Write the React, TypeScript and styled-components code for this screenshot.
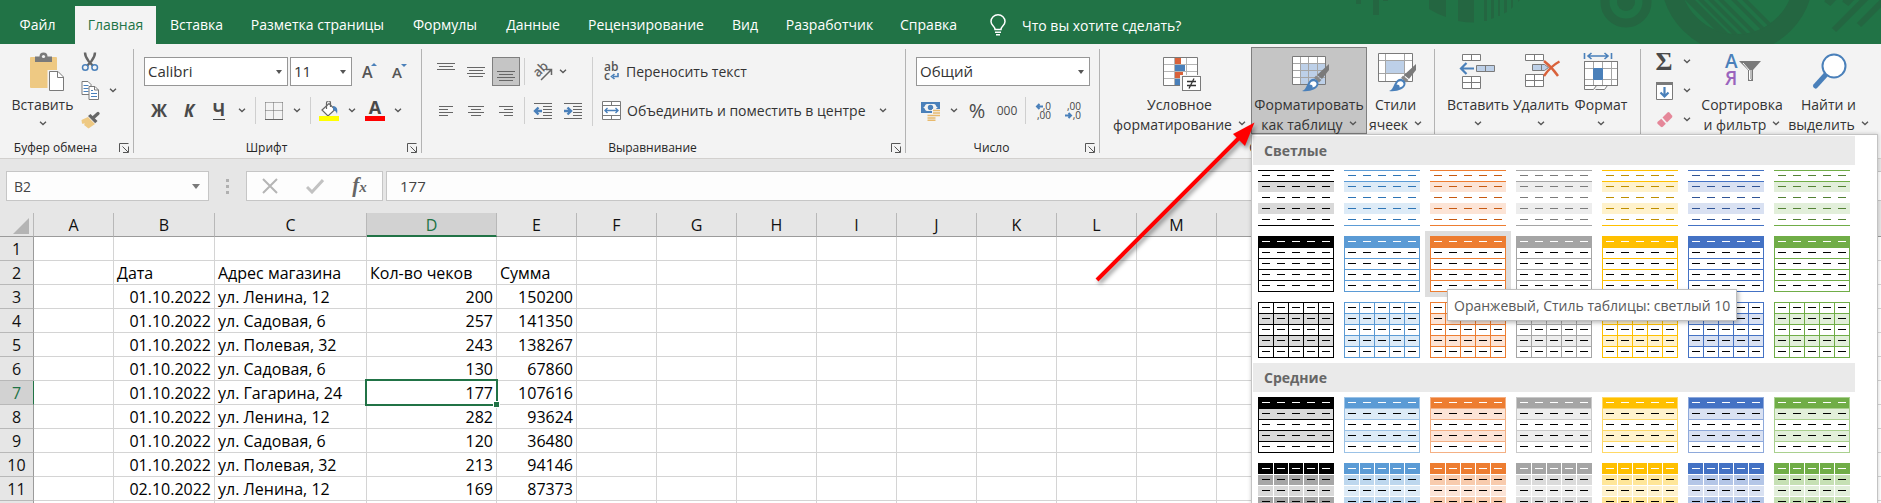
import React from "react";
import styled, { createGlobalStyle, css } from "styled-components";

/* ---------- tokens ---------- */
const GREEN = "#217346";
const BLUE = "#4a80ba";
const GREY = "#7a7a7a";
const UI = `"Open Sans", "Noto Sans", sans-serif`;

const GlobalStyle = createGlobalStyle`
  *, *::before, *::after { box-sizing: border-box; }
  body { margin: 0; font-family: ${UI}; font-size: 14px; color: #333; }
  button, input, select { font: inherit; color: inherit; margin: 0; }
  button { background: none; border: 0; padding: 0; cursor: pointer; }
`;

const Page = styled.div`
  position: relative;
  display: flex;
  flex-direction: column;
  height: 100vh;
  overflow: hidden;
  background: #fff;
`;

/* ---------- tab strip ---------- */
const TabStrip = styled.header`
  position: relative;
  display: flex;
  flex: none;
  height: 44px;
  padding-top: 6px;
  background: ${GREEN};
`;
const Tab = styled.button<{ $w: number; $active?: boolean }>`
  flex: none;
  width: ${(p) => p.$w}px;
  padding-bottom: 1px;
  white-space: nowrap;
  color: ${(p) => (p.$active ? GREEN : "#fff")};
  background: ${(p) => (p.$active ? "#f3f3f3" : "transparent")};
`;
const TellMe = styled.button`
  display: flex;
  align-items: center;
  gap: 16px;
  margin-left: 20px;
  color: #fff;
  white-space: nowrap;
`;
const Pattern = styled.svg`
  position: absolute;
  top: 0;
  right: 0;
`;

/* ---------- ribbon ---------- */
const Ribbon = styled.div`
  display: flex;
  flex: none;
  height: 115px;
  padding-top: 3px;
  background: #f3f3f3;
  border-bottom: 1px solid #d2d0ce;
`;
const GroupBox = styled.section<{ $w?: number }>`
  display: flex;
  flex-direction: column;
  ${(p) => (p.$w ? css`flex: none; width: ${p.$w}px;` : css`flex: 1;`)}
`;
const GroupBody = styled.div<{ $pad: number }>`
  display: flex;
  height: 87px;
  padding-left: ${(p) => p.$pad}px;
`;
const GroupFoot = styled.div`
  display: flex;
  align-items: center;
  height: 24px;
  padding-top: 3px;
  font-size: 12px;
  line-height: 20px;
  color: #262626;
`;
const GroupName = styled.span`
  flex: 1;
  text-align: center;
  white-space: nowrap;
`;
const Launcher = styled.button`
  display: flex;
  width: 22px;
  justify-content: center;
  padding-left: 4px;
`;
const GroupRule = styled.i`
  flex: none;
  width: 1px;
  margin: 2px 0 5px;
  background: #b3b3b3;
`;
const Rule = styled.i<{ $tall?: boolean; $l?: number; $r?: number }>`
  flex: none;
  width: 1px;
  height: ${(p) => (p.$tall ? 69 : 27)}px;
  margin-left: ${(p) => p.$l ?? 3}px;
  margin-right: ${(p) => p.$r ?? 3}px;
  background: #cfcfcf;
`;
const Rows = styled.div`
  display: flex;
  flex-direction: column;
  gap: 10px;
  padding-top: 10px;
`;
const Row = styled.div`
  display: flex;
  align-items: center;
  height: 29px;
`;
const SmallColumn = styled.div`
  display: flex;
  flex-direction: column;
  width: 48px;
`;
const Tool = styled.button<{ $on?: boolean }>`
  display: flex;
  flex: none;
  align-items: center;
  justify-content: center;
  width: ${(p) => (p.$on ? 28 : 30)}px;
  height: 29px;
  margin: ${(p) => (p.$on ? "0 1px" : "0")};
  ${(p) => p.$on && css`background: #c5c5c5; border: 1px solid #7f7f7f;`}
`;
const Drop = styled.button<{ $w?: number }>`
  display: flex;
  flex: none;
  align-items: center;
  justify-content: center;
  width: ${(p) => p.$w ?? 16}px;
  height: 29px;
`;
const Glyph = styled.span<{ $size?: number; $italic?: boolean; $under?: boolean; $bold?: boolean; $serif?: boolean }>`
  font-family: ${(p) => (p.$serif ? `"Liberation Serif", serif` : UI)};
  font-size: ${(p) => p.$size ?? 17}px;
  line-height: 18px;
  font-weight: ${(p) => (p.$bold ? 700 : 400)};
  font-style: ${(p) => (p.$italic ? "italic" : "normal")};
  border-bottom: ${(p) => (p.$under ? "1px solid #444" : "0")};
  color: #4a4a4a;
`;
const Swab = styled.span<{ $ink: string }>`
  display: flex;
  flex-direction: column;
  align-items: center;
  width: 20px;
  height: 20px;
  border-bottom: 5px solid ${(p) => p.$ink};
  font-size: 18px;
  font-weight: 700;
  line-height: 13px;
  color: #4a4a4a;
`;
const WideTool = styled.button`
  display: flex;
  align-items: center;
  gap: 6px;
  height: 29px;
  white-space: nowrap;
`;
const Big = styled.button<{ $w: number; $on?: boolean }>`
  display: flex;
  flex: none;
  flex-direction: column;
  align-items: center;
  width: ${(p) => p.$w}px;
  height: 87px;
  border: 1px solid ${(p) => (p.$on ? "#7f7f7f" : "transparent")};
  background: ${(p) => (p.$on ? "#c5c5c5" : "transparent")};
  line-height: 20px;
  white-space: nowrap;
`;
const BigIcon = styled.span`
  display: flex;
  flex: none;
  align-items: center;
  height: 46px;
`;
const BigLine = styled.span`
  display: flex;
  flex: none;
  align-items: center;
  justify-content: center;
  gap: 6px;
  height: 20px;
  padding-top: 1px;
  svg { margin-bottom: 3px; }
`;
const Anchor = styled.div`
  position: relative;
`;
const SelectBox = styled.span<{ $w: number }>`
  position: relative;
  flex: none;
  width: ${(p) => p.$w}px;
  height: 29px;
  margin-right: 2px;
  &::after {
    content: "";
    position: absolute;
    right: 6px;
    top: 13px;
    border: 3px solid transparent;
    border-top: 4px solid #555;
    border-bottom: 0;
    pointer-events: none;
  }
  select {
    appearance: none;
    width: 100%;
    height: 100%;
    padding: 0 0 1px 3px;
    border: 1px solid #969696;
    border-radius: 0;
    background: #fff;
    font-size: 15px;
  }
`;

/* ---------- gallery ---------- */
const Gallery = styled.div`
  position: absolute;
  z-index: 5;
  top: 100%;
  left: 0;
  width: 627px;
  padding: 1px;
  background: #fff;
  border: 1px solid #c3c3c3;
  box-shadow: 0 0 4px rgba(0, 0, 0, 0.2);
`;
const GalleryTitle = styled.h2`
  width: 602px;
  height: 29px;
  margin: 0;
  padding-left: 11px;
  background: #eaeaea;
  color: #666;
  font-size: 14px;
  font-weight: 700;
  line-height: 30px;
`;
const SwatchGrid = styled.div`
  display: grid;
  width: 602px;
  grid-template-columns: repeat(7, 86px);
  grid-auto-rows: 66px;
`;
const Swatch = styled.button<{ $hover?: boolean }>`
  display: flex;
  align-items: center;
  justify-content: center;
  background: ${(p) => (p.$hover ? "#dedede" : "transparent")};
`;
const Tooltip = styled.div`
  position: absolute;
  z-index: 6;
  top: 154px;
  left: 195px;
  height: 32px;
  padding: 0 6px;
  border: 1px solid #bebebe;
  background: #fff;
  color: #595959;
  line-height: 32px;
  white-space: nowrap;
  box-shadow: 2px 2px 4px rgba(0, 0, 0, 0.25);
`;

/* ---------- formula bar ---------- */
const FormulaBar = styled.div`
  display: flex;
  flex: none;
  height: 54px;
  padding: 12px 0 12px 6px;
  background: #e6e6e6;
  color: #444;
`;
const NameBox = styled.div`
  display: flex;
  width: 203px;
  border: 1px solid #c6c6c6;
  background: #fdfdfd;
  input {
    flex: 1;
    min-width: 0;
    border: 0;
    padding: 0 0 0 7px;
    background: transparent;
  }
  button { width: 24px; }
`;
const Triangle = styled.i`
  display: block;
  width: 0;
  margin: 0 auto;
  border: 4px solid transparent;
  border-top: 5px solid #7a7a7a;
  border-bottom: 0;
`;
const Dots = styled.span`
  display: flex;
  flex-direction: column;
  align-items: center;
  justify-content: center;
  gap: 3px;
  width: 37px;
  i { width: 3px; height: 3px; background: #b0b0b0; }
`;
const EntryTools = styled.div`
  display: flex;
  width: 137px;
  margin-right: 3px;
  border: 1px solid #c6c6c6;
  background: #fdfdfd;
  button { flex: 1; display: flex; align-items: center; justify-content: center; }
`;
const FormulaInput = styled.input`
  flex: 1;
  min-width: 0;
  padding: 0 0 0 13px;
  border: 1px solid #c6c6c6;
  border-right: 0;
  border-radius: 0;
  background: #fdfdfd;
  font-size: 15px;
`;
const Fx = styled.span`
  font: italic 700 21px/24px "Liberation Serif", serif;
  color: #666;
  small { font-size: 15px; }
`;

/* ---------- sheet ---------- */
const Sheet = styled.table`
  flex: none;
  width: max-content;
  table-layout: fixed;
  border-spacing: 0;
  font-size: 16px;
  line-height: 22px;
  color: #000;
  tr { height: 24px; }
  th, td { padding: 1px 3px 0; height: 24px; white-space: nowrap; overflow: visible; }
`;
const ColHead = styled.th<{ $on?: boolean }>`
  font-weight: 400;
  line-height: 20px;
  text-align: center;
  color: ${(p) => (p.$on ? GREEN : "#111")};
  background: ${(p) => (p.$on ? "#d2d2d2" : "#e6e6e6")};
  border-right: 1px solid #b8b8b8;
  border-bottom: ${(p) => (p.$on ? `2px solid ${GREEN}` : "1px solid #9b9b9b")};
`;
const Corner = styled.th`
  background: #e6e6e6;
  border-right: 1px solid #b8b8b8;
  border-bottom: 1px solid #9b9b9b;
  svg { display: block; margin: 2px 0 0 10px; }
`;
const RowHead = styled.th<{ $on?: boolean }>`
  font-weight: 400;
  text-align: center;
  color: ${(p) => (p.$on ? GREEN : "#111")};
  background: ${(p) => (p.$on ? "#d2d2d2" : "#e6e6e6")};
  border-right: 1px solid ${(p) => (p.$on ? GREEN : "#9b9b9b")};
  border-bottom: 1px solid #b8b8b8;
`;
const Cell = styled.td<{ $num?: boolean; $on?: boolean }>`
  text-align: ${(p) => (p.$num ? "right" : "left")};
  border-right: 1px solid #d4d4d4;
  border-bottom: 1px solid #d4d4d4;
  ${(p) =>
    p.$on &&
    css`
      position: relative;
      &::before {
        content: "";
        position: absolute;
        inset: -2px;
        border: 2px solid ${GREEN};
      }
      &::after {
        content: "";
        position: absolute;
        right: -4px;
        bottom: -4px;
        width: 7px;
        height: 7px;
        border: 1px solid #fff;
        background: ${GREEN};
      }
    `}
`;
const Pointer = styled.svg`
  position: absolute;
  z-index: 8;
  top: 110px;
  left: 1085px;
  pointer-events: none;
  filter: drop-shadow(2px 3px 2px rgba(0, 0, 0, 0.4));
`;

/* ---------- icons ---------- */
const Chevron = () => (
  <svg width="8" height="5" viewBox="0 0 8 5" fill="none" stroke="#555" strokeWidth="1.3">
    <path d="M1 .8 4 3.6 7 .8" />
  </svg>
);
const LauncherIcon = () => (
  <svg width="11" height="10" viewBox="0 0 11 10" fill="none" stroke="#555">
    <path d="M.5 9V.5H9.500M3.500 3.500 9 9M9.500 3.500V9.500H4" />
  </svg>
);
const Bulb = () => (
  <svg width="16" height="22" viewBox="0 0 16 22" fill="none" stroke="#fff" strokeWidth="1.5">
    <path d="M5 15.500C5 12.500 1 11.500 1 7.500a7 6.700 0 0 1 14 0c0 4-4 5-4 8Z" />
    <path d="M5 18.200h6M6 20.700h4" />
  </svg>
);
const PasteIcon = () => (
  <svg width="38" height="40" viewBox="0 0 38 40" overflow="visible">
    <rect x="6" y="6" width="27" height="31" rx="1" fill="#eec983" />
    <path d="M11 11V5.500h4.500a4 4 0 0 1 8 0H28V11Z" fill={GREY} />
    <circle cx="19.500" cy="5.500" r="1.600" fill="#f3f3f3" />
    <path d="M23.500 19h10.800l6 6v15.500H23.500Z" fill="#f3f3f3" />
    <path d="M25.500 20.500h8.500l5.500 5.500v13.500h-14Z" fill="#fff" stroke={GREY} />
    <path d="M33.500 20.500V26.500h6" fill="none" stroke={GREY} />
  </svg>
);
const CutIcon = () => (
  <svg width="18" height="20" viewBox="0 0 18 20" fill="none">
    <path d="M4 .5c0 3 2 6.500 3.500 8.500l5 5.500M14 .5c0 3-2 6.500-3.500 8.500l-5 5.500" stroke="#666" strokeWidth="2.400" />
    <circle cx="4.300" cy="15.500" r="2.800" stroke={BLUE} strokeWidth="1.500" fill="#f3f3f3" />
    <circle cx="13.700" cy="15.500" r="2.800" stroke={BLUE} strokeWidth="1.500" fill="#f3f3f3" />
  </svg>
);
const CopyIcon = () => (
  <svg width="18" height="19" viewBox="0 0 18 19" fill="#fff" stroke={GREY}>
    <path d="M1 .5h6l3 3v10H1Z" />
    <path d="M2.500 4.500h5M2.500 7.500h5M2.500 10.500h5" stroke={BLUE} />
    <path d="M8 5.500h6l3.500 3.500v9.500H8Z" />
    <path d="M13.500 5.500V9h4" fill="none" />
    <path d="M10 9.500h2M10 12.500h6M10 15.500h6" stroke={BLUE} />
  </svg>
);
const PainterIcon = () => (
  <svg width="19" height="18" viewBox="0 0 19 18">
    <path d="M.5 9 7 6l7 7-6.500 4.500L3 14l1-1.500-3 .3Z" fill="#eec983" />
    <path d="M7 5 9.500 3l7 7-2.300 2.300Z" fill="#666" />
    <path d="m12.500 6.500 4.500-4" stroke="#666" strokeWidth="3.200" strokeLinecap="round" />
  </svg>
);
const GrowFont = ({ down }: { down?: boolean }) => (
  <svg width="20" height="20" viewBox="0 0 20 20" overflow="visible">
    <text x="3" y="16" fontFamily="Open Sans" fontWeight="600" fontSize={down ? 15 : 16} fill="#555">A</text>
    <path d={down ? "M12 2h6l-3 3Z" : "M12 4h6l-3-3Z"} fill={BLUE} />
  </svg>
);
const BordersIcon = () => (
  <svg width="18" height="18" viewBox="0 0 18 18" fill="none" stroke="#666">
    <path d="M.5 .5h17M.5 8.500h17M.5 .5v17M8.500 .5v17M17.500 .5v17" strokeDasharray="1 1" />
    <path d="M0 17.500h18" />
  </svg>
);
const FillIcon = () => (
  <svg width="22" height="20" viewBox="0 0 22 20">
    <path d="m4 9 7-6.500 6 6-7 6.500Z" fill="#fff" stroke="#666" strokeWidth="1.200" />
    <path d="M8.500 8V2a2 2 0 0 1 4 0v4" fill="none" stroke="#666" strokeWidth="1.200" />
    <path d="M15 5c4 .5 5 3 4 8-1-3-2.500-4-4-4Z" fill={BLUE} />
    <rect x="1" y="15" width="20" height="5" fill="#ff0" />
  </svg>
);
const Lines = ({ rows }: { rows: [number, number, number][] }) => (
  <svg width="20" height="20" viewBox="0 0 20 20" stroke="#666">
    {rows.map(([x, y, w]) => (
      <path key={y} d={`M${x} ${y}.5h${w}`} />
    ))}
  </svg>
);
const IndentIcon = ({ right }: { right?: boolean }) => (
  <svg width="20" height="18" viewBox="0 0 20 18" stroke="#666">
    <path d="M1 1.500h18M10 4.500h9M10 7.500h9M10 10.500h9M10 13.500h9M1 16.500h18" />
    <path
      d={right ? "M1 9h6M4.500 5.500 8 9l-3.500 3.500" : "M9 9H3M5.500 5.500 2 9l3.500 3.500"}
      fill="none" stroke={BLUE} strokeWidth="2.400"
    />
  </svg>
);
const AngleIcon = () => (
  <svg width="20" height="20" viewBox="0 0 20 20" overflow="visible">
    <text x="3" y="15" fontFamily="Open Sans" fontWeight="600" fontSize="13" fill="#666" transform="rotate(-45 5 13)">ab</text>
    <path d="m8 18 10-10M13 7.500h5.500V13" fill="none" stroke="#666" strokeWidth="1.500" />
  </svg>
);
const WrapIcon = () => (
  <svg width="18" height="20" viewBox="0 0 18 20" overflow="visible">
    <text x="2" y="9" fontFamily="Open Sans" fontWeight="600" fontSize="12" fill="#555">ab</text>
    <text x="2" y="18" fontFamily="Open Sans" fontWeight="600" fontSize="12" fill="#555">c</text>
    <path d="M16 11v3.500h-5M12.500 12l-3 2.500 3 2.500" fill="none" stroke={BLUE} strokeWidth="1.600" />
  </svg>
);
const MergeIcon = () => (
  <svg width="19" height="19" viewBox="0 0 19 19" fill="#fff" stroke={GREY}>
    <path d="M.5 .5h18v18H.5ZM.5 4.500h18M.5 14.500h18M9.500 .5v4M9.500 14.500v4" />
    <path d="M3 9.500h13M5.500 7 3 9.500 5.500 12M13.500 7 16 9.500 13.500 12" fill="none" stroke={BLUE} strokeWidth="1.400" />
  </svg>
);
const MoneyIcon = () => (
  <svg width="20" height="20" viewBox="0 0 20 20">
    <rect x="0" y="1" width="19" height="11" fill={BLUE} />
    <path d="M2 6.500c2 0 2-3.500 4-3.500h7c2 0 2 3.500 4 3.500-2 0-2 3.500-4 3.500H6c-2 0-2-3.500-4-3.500Z" fill="#f3f3f3" />
    <circle cx="9.500" cy="6.500" r="2.700" fill={BLUE} />
    <path d="M11 8h9v11h-5v1H5v-7h6Z" fill="#f3f3f3" />
    <path d="M12 9.500h7M12 12h7M12 14.500h7M6.500 14.500h8M6.500 17h8M6.500 19.300h8" stroke="#e8b96c" strokeWidth="1.700" />
  </svg>
);
const DecimalIcon = ({ less }: { less?: boolean }) => (
  <svg width="20" height="20" viewBox="0 0 20 20" overflow="visible" fontFamily="Open Sans" fontSize="10" fill="#444">
    <text x="17" y="9" textAnchor="end">{less ? ",00" : ",0"}</text>
    <text x="17" y="18" textAnchor="end">{less ? ",0" : ",00"}</text>
    <path
      d={less ? "M1 14.500h6M4.500 12 7 14.500 4.500 17" : "M9 5.500H3M5.500 3 3 5.500 5.500 8"}
      fill="none" stroke={BLUE} strokeWidth="2"
    />
  </svg>
);
const ConditionalIcon = () => (
  <svg width="38" height="40" viewBox="0 0 38 40" overflow="visible">
    <path d="M2.500 6.500h34v28h-34Z" fill="#fff" />
    <path d="M13 7h7v6h-7ZM13 21h9v6h-9Z" fill="#d9623b" />
    <path d="M13 14h11v6H13ZM13 28h6v6h-6Z" fill={BLUE} />
    <path d="M13.500 7v27M25.500 7v27M3 13.500h33M3 20.500h33M3 27.500h33" stroke="#b5b5b5" />
    <path d="M2.500 6.500h34v28h-34Z" fill="none" stroke={GREY} />
    <rect x="19" y="24" width="22" height="17" fill="#f3f3f3" />
    <rect x="21.500" y="25.500" width="18" height="14" fill="#fff" stroke={GREY} />
    <path d="M26 30.500h9M26 34.500h9M33 27.500l-5 10" stroke="#333" strokeWidth="1.300" />
  </svg>
);
const Brush = () => (
  <g>
    <path d="M39 13v6L32 28l-5-4Z" fill={GREY} />
    <path d="m26 24.500 5.500 4.500-2.500 2.500-5-4.500Z" fill="#888" />
    <path d="M12 40c5-1 4-8 9-11.500 3-2 8 1 7.500 4.500C28 38 20 41 12 40Z" fill={BLUE} />
    <path d="M21 31c3-2 6 0 5.500 2.500-.5 1.500-2 2.500-4 3 .5-2-.5-3-3-3Z" fill="#fff" />
  </g>
);
const FormatTableIcon = () => (
  <svg width="38" height="40" viewBox="0 0 38 40" overflow="visible">
    <path d="M2.500 5.500h33v28h-33Z" fill="#fff" />
    <path d="M11 13h24v20H11Z" fill="#bdd0e8" />
    <path d="M10.500 6v27M18.500 6v27M27.500 6v27M3 12.500h32M3 19.500h32M3 26.500h32" stroke="#a5a5a5" />
    <path d="M2.500 5.500h33v28h-33Z" fill="none" stroke={GREY} />
    <Brush />
  </svg>
);
const CellStylesIcon = () => (
  <svg width="38" height="40" viewBox="0 0 38 40" overflow="visible">
    <path d="M1.500 2.500h34v28h-34Z" fill="#fff" />
    <path d="M9 10h18v12H9Z" fill="#bdd0e8" />
    <path d="M8.500 3v27M27.500 3v27M2 9.500h33M2 22.500h33" stroke="#a5a5a5" />
    <path d="M1.500 2.500h34v28h-34Z" fill="none" stroke={GREY} />
    <Brush />
  </svg>
);
const InsertIcon = () => (
  <svg width="38" height="40" viewBox="0 0 38 40" fill="#fff" stroke={GREY}>
    <path d="M3.500 3.500h18v6h-18ZM12.500 3.500v6M3.500 25.500h18v12h-18ZM12.500 25.500v12M3.500 31.500h18" />
    <path d="M17.500 14.500h18v6h-18ZM26.500 14.500v6" fill="#bdd0e8" />
    <path d="M15 17.500H2M7.500 12 2 17.500 7.500 23" fill="none" stroke={BLUE} strokeWidth="2.200" />
  </svg>
);
const DeleteIcon = () => (
  <svg width="38" height="40" viewBox="0 0 38 40" fill="#fff" stroke={GREY}>
    <path d="M3.500 3.500h18v6h-18ZM12.500 3.500v6M3.500 23.500h18v12h-18ZM12.500 23.500v12M3.500 29.500h18" />
    <path d="M10.500 13.500h12l4 3-4 3h-12ZM19.500 13.500v6" fill="#bdd0e8" />
    <path d="M22 10c5 4 10 9 14 15M37.500 10.500C31 14 26 19 22 25" fill="none" stroke="#d9623b" strokeWidth="2.400" />
  </svg>
);
const FormatIcon = () => (
  <svg width="38" height="40" viewBox="0 0 38 40" fill="#fff" stroke={GREY}>
    <path d="M2.500 2v6M29.500 2v6M6 5h20M9.500 2 6 5l3.500 3M22.500 2 26 5l-3.500 3" fill="none" stroke={BLUE} strokeWidth="1.600" />
    <path d="M2.500 34.500v4h9l3-4M13.500 38.500h9l3-4" />
    <path d="M2.500 10.500h33v24h-33Z" />
    <path d="M11.500 11v23M20.500 11v23M29.500 11v23M3 17.500h32M3 28.500h32" stroke="#a5a5a5" />
    <path d="M11.500 17.500h9v11h-9Z" fill={BLUE} stroke={BLUE} />
    <path d="M2.500 10.500h33v24h-33Z" fill="none" />
  </svg>
);
const FillDownIcon = () => (
  <svg width="17" height="18" viewBox="0 0 17 18">
    <path d="M.5 .5h16v17H.5Z" fill="#fff" stroke={GREY} />
    <path d="M0 0h17v3H0Z" fill={GREY} />
    <path d="M8.500 5v9M4.500 10.500l4 4 4-4" fill="none" stroke={BLUE} strokeWidth="2.200" />
  </svg>
);
const EraserIcon = () => (
  <svg width="17" height="18" viewBox="0 0 17 18">
    <path d="m6.500 6.500 5-5q1-.8 2 0l2.500 3q.8 1 0 2l-5 5Z" fill="#e58799" />
    <path d="m5.300 7.700 4.500 5-3 3q-1 .9-2 0l-3.300-3q-.7-1 .2-2Z" fill="#e58799" />
  </svg>
);
const SortIcon = () => (
  <svg width="38" height="40" viewBox="0 0 38 40" overflow="visible" fontFamily="Open Sans" fontWeight="600" fontSize="19">
    <text x="2" y="17" fill={BLUE}>А</text>
    <text x="2" y="34" fill="#9a64bd">Я</text>
    <path d="M16 10h22l-8 9v11h-5V19Z" fill={GREY} />
    <path d="m20 12 6.500 7.500V28.500h1.500V19" fill="none" stroke="#fff" strokeWidth="1" />
  </svg>
);
const FindIcon = () => (
  <svg width="38" height="40" viewBox="0 0 38 40">
    <path d="m15.500 24-10 11" stroke={BLUE} strokeWidth="5" strokeLinecap="round" />
    <circle cx="24" cy="15" r="11.500" fill="#fff" stroke={BLUE} strokeWidth="2" />
  </svg>
);

const HeaderPattern = () => (
  <Pattern width="541" height="44" viewBox="1340 0 541 44" fill="#246641">
    <defs>
      <clipPath id="disc"><circle cx="1737" cy="-23" r="58" /></clipPath>
    </defs>
    <path d="M1356 0h5v4h-5ZM1373 0h6v15h-6ZM1383 0h5v1h-5Z" />
    <path d="M1429 0h17v17q-9-3-17-8ZM1458 0h16v22.500q-8 0-16-1.500ZM1484 0h3v21h-3ZM1491 0h3v18l-3 1ZM1498 0h2v16h-2ZM1504 0h3v12l-3 1.500ZM1511 0h2v7l-2 2ZM1518 0h2l-2 2Z" />
    <circle cx="1626" cy="2" r="21" fill="none" stroke="#246641" strokeWidth="9" />
    <circle cx="1626" cy="2" r="9" />
    <circle cx="1737" cy="-23" r="66.500" fill="none" stroke="#246641" strokeWidth="19" />
    <g clipPath="url(#disc)" stroke="#246641" strokeWidth="4">
      <path d="m1686-4 50 50" strokeWidth="7" />
      <path d="m1697-4 50 50M1707-4l50 50M1717-4l50 50M1730-4l50 50M1741-4l50 50" />
    </g>
    <path d="m1834 30 34-34M1859 25l28-28M1826-1l4 3 4-4M1844-1l4 3 4-4" fill="none" stroke="#246641" strokeWidth="6" />
  </Pattern>
);

/* ---------- table style thumbnails ---------- */
type Tone = { name: string; base: string; dark: string; pale: string; mid: string; edge: string };
const TONES: Tone[] = [
  { name: "Чёрный", base: "#000", dark: "#000", pale: "#d9d9d9", mid: "#a6a6a6", edge: "#000" },
  { name: "Синий", base: "#5b9bd5", dark: "#2e75b6", pale: "#ddebf7", mid: "#bdd7ee", edge: "#9bc2e6" },
  { name: "Оранжевый", base: "#ed7d31", dark: "#c65911", pale: "#fce4d6", mid: "#f8cbad", edge: "#f4b084" },
  { name: "Серый", base: "#a5a5a5", dark: "#7b7b7b", pale: "#ededed", mid: "#dbdbdb", edge: "#c9c9c9" },
  { name: "Золотистый", base: "#ffc000", dark: "#bf8f00", pale: "#fff2cc", mid: "#ffe699", edge: "#ffd966" },
  { name: "Голубой", base: "#4472c4", dark: "#305496", pale: "#d9e1f2", mid: "#b4c6e7", edge: "#8ea9db" },
  { name: "Зелёный", base: "#70ad47", dark: "#548235", pale: "#e2efda", mid: "#c6e0b4", edge: "#a9d08e" },
];
type Kind = "striped" | "boxed" | "grid" | "banded" | "tiles";
const five = [0, 1, 2, 3, 4];
const LINES_BY_KIND: Record<Kind, number[]> = {
  striped: [0, 11, 55],
  boxed: [0, 11, 22, 33, 44, 55],
  grid: [0, 11, 22, 33, 44, 55],
  banded: [0, 11, 22, 33, 44, 55],
  tiles: [11, 22, 33, 44],
};

function Thumb({ kind, tone }: { kind: Kind; tone: Tone }) {
  const header = kind === "boxed" || kind === "banded" || kind === "tiles";
  const line = kind === "tiles" ? "#fff" : kind === "banded" ? tone.edge : tone.base;
  const fillOf = (r: number) => {
    if (r === 0) return header ? tone.base : "#fff";
    if (kind === "boxed") return "#fff";
    if (kind === "tiles") return r % 2 ? tone.mid : tone.pale;
    return r % 2 ? tone.pale : "#fff";
  };
  const inkOf = (r: number) => (r === 0 && header ? "#fff" : kind === "striped" ? tone.dark : "#000");
  return (
    <svg width="76" height="56" viewBox="0 0 76 56" shapeRendering="crispEdges">
      {five.map((r) => (
        <rect key={r} y={r * 11} width="76" height="12" fill={fillOf(r)} />
      ))}
      {LINES_BY_KIND[kind].map((y) => (
        <rect key={y} y={y} width="76" height="1" fill={line} />
      ))}
      {(kind === "boxed" || kind === "banded") && (
        <path d="M.5 0v56M75.500 0v56" stroke={line} />
      )}
      {kind === "grid" && <path d="M.5 0v56M15.500 0v56M30.500 0v56M45.500 0v56M60.500 0v56M75.500 0v56" stroke={line} />}
      {kind === "tiles" && <path d="M15.500 0v56M30.500 0v56M45.500 0v56M60.500 0v56" stroke="#fff" />}
      {five.map((r) =>
        five.map((c) => <rect key={`${r}${c}`} x={4 + c * 15} y={5 + r * 11} width="8" height="1" fill={inkOf(r)} />)
      )}
    </svg>
  );
}

const Swatches = ({ kinds }: { kinds: Kind[] }) => (
  <SwatchGrid>
    {kinds.map((kind) =>
      TONES.map((tone) => (
        <Swatch
          key={kind + tone.name}
          aria-label={tone.name}
          $hover={kind === "boxed" && tone.name === "Оранжевый"}
        >
          <Thumb kind={kind} tone={tone} />
        </Swatch>
      ))
    )}
  </SwatchGrid>
);

/* ---------- composition ---------- */
type GroupProps = { w?: number; pad: number; name: string; launcher?: boolean; children: React.ReactNode };
const Group = ({ w, pad, name, launcher, children }: GroupProps) => (
  <>
    <GroupBox $w={w} aria-label={name}>
      <GroupBody $pad={pad}>{children}</GroupBody>
      <GroupFoot>
        <GroupName>{name}</GroupName>
        {launcher && (
          <Launcher aria-label={`${name}: параметры`}>
            <LauncherIcon />
          </Launcher>
        )}
      </GroupFoot>
    </GroupBox>
    {w && <GroupRule />}
  </>
);

type BigProps = { w: number; icon: React.ReactNode; top: string; bottom?: string; on?: boolean };
const BigButton = ({ w, icon, top, bottom, on }: BigProps) => (
  <Big $w={w} $on={on}>
    <BigIcon>{icon}</BigIcon>
    <BigLine>{top}</BigLine>
    <BigLine>
      {bottom}
      <Chevron />
    </BigLine>
  </Big>
);

const Arrow = ({ w, label }: { w?: number; label: string }) => (
  <Drop $w={w} aria-label={label}>
    <Chevron />
  </Drop>
);

const TABS: [string, number][] = [
  ["Файл", 75], ["Главная", 81], ["Вставка", 81], ["Разметка страницы", 161], ["Формулы", 94],
  ["Данные", 82], ["Рецензирование", 144], ["Вид", 54], ["Разработчик", 115], ["Справка", 83],
];

const COLUMNS: [string, number][] = [
  ["A", 80], ["B", 101], ["C", 152], ["D", 130], ["E", 80],
  ..."FGHIJKLMNOPQRSTUV".split("").map((l): [string, number] => [l, 80]),
];

const DATA: Record<number, string[]> = {
  2: ["Дата", "Адрес магазина", "Кол-во чеков", "Сумма"],
  3: ["01.10.2022", "ул. Ленина, 12", "200", "150200"],
  4: ["01.10.2022", "ул. Садовая, 6", "257", "141350"],
  5: ["01.10.2022", "ул. Полевая, 32", "243", "138267"],
  6: ["01.10.2022", "ул. Садовая, 6", "130", "67860"],
  7: ["01.10.2022", "ул. Гагарина, 24", "177", "107616"],
  8: ["01.10.2022", "ул. Ленина, 12", "282", "93624"],
  9: ["01.10.2022", "ул. Садовая, 6", "120", "36480"],
  10: ["01.10.2022", "ул. Полевая, 32", "213", "94146"],
  11: ["02.10.2022", "ул. Ленина, 12", "169", "87373"],
};
const ROWS = Array.from({ length: 12 }, (_, i) => i + 1);

const Worksheet = () => (
  <Sheet>
    <colgroup>
      <col width={33} />
      {COLUMNS.map(([l, w]) => (
        <col key={l} width={w} />
      ))}
    </colgroup>
    <thead>
      <tr>
        <Corner aria-label="Выделить все">
          <svg width="17" height="17" viewBox="0 0 17 17"><path d="M16 0v16H0Z" fill="#b4b4b4" /></svg>
        </Corner>
        {COLUMNS.map(([l]) => (
          <ColHead key={l} $on={l === "D"}>{l}</ColHead>
        ))}
      </tr>
    </thead>
    <tbody>
      {ROWS.map((r) => (
        <tr key={r}>
          <RowHead $on={r === 7}>{r}</RowHead>
          {COLUMNS.map(([l], c) => (
            <Cell key={l} $num={r > 2 && l !== "C"} $on={r === 7 && l === "D"}>
              {DATA[r]?.[c - 1]}
            </Cell>
          ))}
        </tr>
      ))}
    </tbody>
  </Sheet>
);

export default function App() {
  return (
    <Page>
      <GlobalStyle />
      <TabStrip>
        <HeaderPattern />
        {TABS.map(([t, w]) => (
          <Tab key={t} $w={w} $active={t === "Главная"}>{t}</Tab>
        ))}
        <TellMe><Bulb />Что вы хотите сделать?</TellMe>
      </TabStrip>

      <Ribbon>
        <Group w={133} pad={10} name="Буфер обмена" launcher>
          <BigButton w={65} icon={<PasteIcon />} top="Вставить" />
          <SmallColumn>
            <Row><Tool aria-label="Вырезать"><CutIcon /></Tool></Row>
            <Row><Tool aria-label="Копировать"><CopyIcon /></Tool><Arrow label="Варианты копирования" /></Row>
            <Row><Tool aria-label="Формат по образцу"><PainterIcon /></Tool></Row>
          </SmallColumn>
        </Group>

        <Group w={287} pad={10} name="Шрифт" launcher>
          <Rows>
            <Row>
              <SelectBox $w={144}><select aria-label="Шрифт"><option>Calibri</option></select></SelectBox>
              <SelectBox $w={62}><select aria-label="Размер шрифта"><option>11</option></select></SelectBox>
              <Tool aria-label="Увеличить размер"><GrowFont /></Tool>
              <Tool aria-label="Уменьшить размер"><GrowFont down /></Tool>
            </Row>
            <Row>
              <Tool><Glyph $bold>Ж</Glyph></Tool>
              <Tool><Glyph $bold $italic>К</Glyph></Tool>
              <Tool><Glyph $bold $under>Ч</Glyph></Tool>
              <Arrow label="Подчёркивание" />
              <Rule $l={5} />
              <Tool aria-label="Границы"><BordersIcon /></Tool>
              <Arrow label="Виды границ" />
              <Rule $l={5} />
              <Tool aria-label="Цвет заливки"><FillIcon /></Tool>
              <Arrow label="Цвета заливки" />
              <Tool><Swab $ink="#f00">А</Swab></Tool>
              <Arrow label="Цвета текста" />
            </Row>
          </Rows>
        </Group>

        <Group w={483} pad={9} name="Выравнивание" launcher>
          <Rows>
            <Row>
              <Tool aria-label="По верхнему краю"><Lines rows={[[1, 1, 18], [3, 4, 14], [1, 7, 18]]} /></Tool>
              <Tool aria-label="По середине"><Lines rows={[[1, 5, 18], [3, 8, 14], [1, 11, 18], [3, 14, 14]]} /></Tool>
              <Tool $on aria-label="По нижнему краю"><Lines rows={[[1, 9, 18], [3, 12, 14], [1, 15, 18], [3, 18, 14]]} /></Tool>
              <Rule />
              <Tool aria-label="Ориентация"><AngleIcon /></Tool>
              <Arrow w={10} label="Варианты ориентации" />
            </Row>
            <Row>
              <Tool aria-label="По левому краю"><Lines rows={[[3, 5, 14], [3, 8, 9], [3, 11, 14], [3, 14, 9]]} /></Tool>
              <Tool aria-label="По центру"><Lines rows={[[2, 5, 16], [5, 8, 10], [2, 11, 16], [5, 14, 10]]} /></Tool>
              <Tool aria-label="По правому краю"><Lines rows={[[3, 5, 14], [8, 8, 9], [3, 11, 14], [8, 14, 9]]} /></Tool>
              <Rule />
              <Tool aria-label="Уменьшить отступ"><IndentIcon /></Tool>
              <Tool aria-label="Увеличить отступ"><IndentIcon right /></Tool>
            </Row>
          </Rows>
          <Rows><Rule $tall $l={4} $r={9} /></Rows>
          <Rows>
            <Row><WideTool><WrapIcon />Переносить текст</WideTool></Row>
            <Row>
              <WideTool><MergeIcon />Объединить и поместить в центре</WideTool>
              <Arrow w={34} label="Варианты объединения" />
            </Row>
          </Rows>
        </Group>

        <Group w={193} pad={10} name="Число" launcher>
          <Rows>
            <Row><SelectBox $w={174}><select aria-label="Числовой формат"><option>Общий</option></select></SelectBox></Row>
            <Row>
              <Tool aria-label="Финансовый формат"><MoneyIcon /></Tool>
              <Arrow label="Валюты" />
              <Tool><Glyph $size={20}>%</Glyph></Tool>
              <Tool><Glyph $size={12}>000</Glyph></Tool>
              <Rule />
              <Tool aria-label="Увеличить разрядность"><DecimalIcon /></Tool>
              <Tool aria-label="Уменьшить разрядность"><DecimalIcon less /></Tool>
            </Row>
          </Rows>
        </Group>

        <Group w={334} pad={8} name="Стили">
          <BigButton w={143} icon={<ConditionalIcon />} top="Условное" bottom="форматирование" />
          <Anchor>
            <BigButton w={116} icon={<FormatTableIcon />} top="Форматировать" bottom="как таблицу" on />
            <Gallery>
              <GalleryTitle>Светлые</GalleryTitle>
              <Swatches kinds={["striped", "boxed", "grid"]} />
              <GalleryTitle>Средние</GalleryTitle>
              <Swatches kinds={["banded", "tiles"]} />
              <Tooltip role="tooltip">Оранжевый, Стиль таблицы: светлый 10</Tooltip>
            </Gallery>
          </Anchor>
          <BigButton w={57} icon={<CellStylesIcon />} top="Стили" bottom="ячеек" />
        </Group>

        <Group w={205} pad={11} name="Ячейки">
          <BigButton w={64} icon={<InsertIcon />} top="Вставить" />
          <BigButton w={62} icon={<DeleteIcon />} top="Удалить" />
          <BigButton w={58} icon={<FormatIcon />} top="Формат" />
        </Group>

        <Group pad={8} name="Редактирование">
          <SmallColumn>
            <Row><Tool><Glyph $size={26} $bold $serif>Σ</Glyph></Tool><Arrow label="Функции" /></Row>
            <Row><Tool aria-label="Заполнить"><FillDownIcon /></Tool><Arrow label="Варианты заполнения" /></Row>
            <Row><Tool aria-label="Очистить"><EraserIcon /></Tool><Arrow label="Варианты очистки" /></Row>
          </SmallColumn>
          <BigButton w={90} icon={<SortIcon />} top="Сортировка" bottom="и фильтр" />
          <BigButton w={83} icon={<FindIcon />} top="Найти и" bottom="выделить" />
        </Group>
      </Ribbon>

      <FormulaBar>
        <NameBox>
          <input aria-label="Имя" defaultValue="B2" />
          <button aria-label="Список имён"><Triangle /></button>
        </NameBox>
        <Dots><i /><i /><i /></Dots>
        <EntryTools>
          <button aria-label="Отмена">
            <svg width="16" height="16" viewBox="0 0 16 16" stroke="#b5b5b5" strokeWidth="2"><path d="m1 1 14 14M15 1 1 15" /></svg>
          </button>
          <button aria-label="Ввод">
            <svg width="18" height="15" viewBox="0 0 18 15" fill="none" stroke="#c2c2c2" strokeWidth="3"><path d="m1 8 5 5L17 1" /></svg>
          </button>
          <button><Fx>f<small>x</small></Fx></button>
        </EntryTools>
        <FormulaInput aria-label="Строка формул" defaultValue="177" />
      </FormulaBar>

      <Worksheet />

      <Pointer width="180" height="180" viewBox="1085 110 180 180">
        <path d="M1097 280 1241 136" stroke="#f00" strokeWidth="4" />
        <path d="M1254.500 122.500 1245 146l-12-12Z" fill="#f00" />
      </Pointer>
    </Page>
  );
}
